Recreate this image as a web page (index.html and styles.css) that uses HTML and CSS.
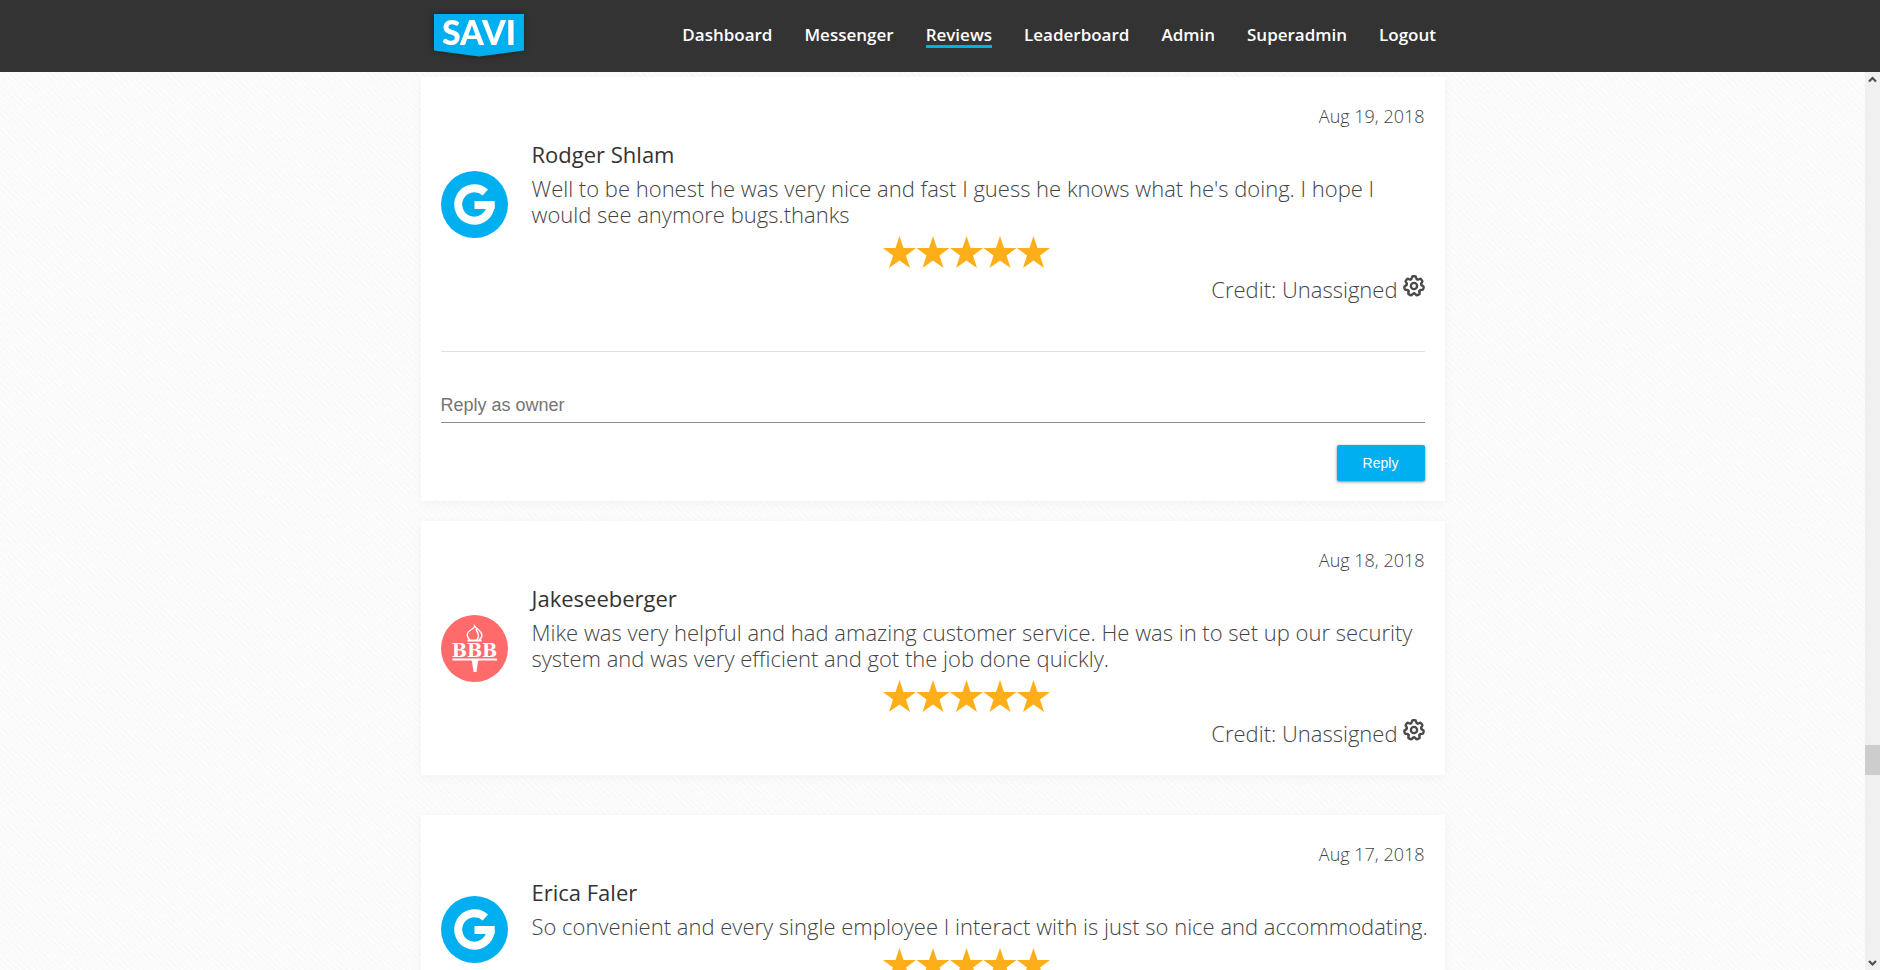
FILE: index.html
```html
<!DOCTYPE html>
<html lang="en">
<head>
  <meta charset="UTF-8">
  <meta name="viewport" content="width=device-width, initial-scale=1.0">
  <title>Savi - Reviews</title>
  <link rel="stylesheet" href="styles.css">
</head>
<body>
  <!-- shared icons -->
  <svg class="sprite" aria-hidden="true">
    <symbol id="google" viewBox="0 0 67 67">
      <circle cx="33.5" cy="33.5" r="33.5" fill="#00aff0"/>
      <path d="M44.3 21.5A16.2 16.2 0 1 0 49.6 34" fill="none" stroke="#fff" stroke-width="8"/>
      <rect x="33.5" y="30" width="20.2" height="8" fill="#fff"/>
    </symbol>
    <symbol id="stars" viewBox="0 0 167 32">
      <g fill="#fdae19">
        <path id="star" d="M16.500 0l4 12h12.500l-10 7.500 4 12.500-10.500-7.500-10.500 7.500 4-12.500-10-7.500h12.500z"/>
        <use href="#star" x="33.500"/>
        <use href="#star" x="67"/>
        <use href="#star" x="100.500"/>
        <use href="#star" x="134"/>
      </g>
    </symbol>
    <symbol id="gear" viewBox="-12 -12 24 24">
      <g fill="none" stroke="#4a4a4a" stroke-width="2.6" stroke-linecap="round" stroke-linejoin="round">
        <circle r="3.4"/>
        <path id="tooth" d="M-3.5-7.3Q-2.3-7.6-2.3-9.2Q-2.1-10.6-1-10.6H1Q2.1-10.6 2.3-9.2Q2.3-7.6 3.5-7.3"/>
        <use href="#tooth" transform="rotate(51.43)"/>
        <use href="#tooth" transform="rotate(102.86)"/>
        <use href="#tooth" transform="rotate(154.29)"/>
        <use href="#tooth" transform="rotate(205.71)"/>
        <use href="#tooth" transform="rotate(257.14)"/>
        <use href="#tooth" transform="rotate(308.57)"/>
      </g>
    </symbol>
  </svg>

  <header class="header">
    <div class="header-inner">
      <a href="#" class="logo" aria-label="Savi">
        <svg width="90" height="43" viewBox="0 0 90 43">
          <path d="M0 0h90v36.500l-45 6-45-6z" fill="#00aff0"/>
          <text x="45" y="31" text-anchor="middle" class="logo-text">SAVI</text>
        </svg>
      </a>
      <nav class="nav">
        <a href="#">Dashboard</a>
        <a href="#">Messenger</a>
        <a href="#" class="active">Reviews</a>
        <a href="#">Leaderboard</a>
        <a href="#">Admin</a>
        <a href="#">Superadmin</a>
        <a href="#">Logout</a>
      </nav>
    </div>
  </header>

  <div class="page">
    <main class="content">
      <article class="card">
        <div class="review">
          <svg class="avatar"><use href="#google"/></svg>
          <div class="review-body">
            <div class="date">Aug 19, 2018</div>
            <h2 class="name">Rodger Shlam</h2>
            <p class="text">Well to be honest he was very nice and fast I guess he knows what he's doing. I hope I would see anymore bugs.thanks</p>
            <div class="rating"><svg class="stars" role="img" aria-label="5 stars"><use href="#stars"/></svg></div>
            <div class="credit">Credit: Unassigned
              <button type="button" class="gear" aria-label="Assign credit"><svg><use href="#gear"/></svg></button>
            </div>
          </div>
        </div>
        <form class="reply">
          <input type="text" class="reply-input" placeholder="Reply as owner" aria-label="Reply as owner">
          <button type="button" class="reply-button">Reply</button>
        </form>
      </article>

      <article class="card">
        <div class="review">
          <svg class="avatar" viewBox="0 0 67 67">
            <circle cx="33.5" cy="33.5" r="33.5" fill="#ff6b6b"/>
            <path d="M29 25C25 21 25.500 18 29 15.500C32 13.500 33.500 13 33.500 11C36 14.500 40.500 15.500 41 20C41 22.500 39.500 24 38 25" fill="none" stroke="#fff" stroke-width="1.3"/>
            <path d="M35 14C36 17.500 39.500 19.500 36 25" fill="none" stroke="#fff" stroke-width="1.5"/>
            <rect x="26.5" y="24.500" width="14" height="2" fill="#fff"/>
            <text x="33.5" y="41.500" text-anchor="middle" class="bbb-text">BBB</text>
            <rect x="11.5" y="43.500" width="44.5" height="2" fill="#fff"/>
            <path d="M30 45h8l-1 1.500-1.500 10.500h-3l-1.500-10.500z" fill="#fff"/>
          </svg>
          <div class="review-body">
            <div class="date">Aug 18, 2018</div>
            <h2 class="name">Jakeseeberger</h2>
            <p class="text">Mike was very helpful and had amazing customer service. He was in to set up our security system and was very efficient and got the job done quickly.</p>
            <div class="rating"><svg class="stars" role="img" aria-label="5 stars"><use href="#stars"/></svg></div>
            <div class="credit">Credit: Unassigned
              <button type="button" class="gear" aria-label="Assign credit"><svg><use href="#gear"/></svg></button>
            </div>
          </div>
        </div>
      </article>

      <article class="card card-spaced">
        <div class="review">
          <svg class="avatar"><use href="#google"/></svg>
          <div class="review-body">
            <div class="date">Aug 17, 2018</div>
            <h2 class="name">Erica Faler</h2>
            <p class="text">So convenient and every single employee I interact with is just so nice and accommodating.</p>
            <div class="rating"><svg class="stars" role="img" aria-label="5 stars"><use href="#stars"/></svg></div>
          </div>
        </div>
      </article>
    </main>

    <div class="scrollbar" aria-hidden="true">
      <svg class="arrow" viewBox="0 0 15 15"><path d="M4 9.500l3.500-3.500 3.500 3.500" fill="none" stroke="#505050" stroke-width="2.2"/></svg>
      <div class="thumb"></div>
      <svg class="arrow arrow-down" viewBox="0 0 15 15"><path d="M4 6l3.500 3.500 3.500-3.500" fill="none" stroke="#505050" stroke-width="2.2"/></svg>
    </div>
  </div>
</body>
</html>
```
FILE: styles.css
```css
* {
  box-sizing: border-box;
}
body {
  margin: 0;
  height: 100vh;
  display: flex;
  flex-direction: column;
  overflow: hidden;
  font-family: "Open Sans", "Noto Sans", sans-serif;
  font-weight: 300;
  color: #444;
  background-color: #fbfbfb;
}
.sprite {
  position: absolute;
  width: 0;
  height: 0;
}

/* Header */
.header {
  flex: none;
  height: 72px;
  background-color: #333;
}
.header-inner {
  max-width: 1024px;
  height: 72px;
  margin: 0 auto;
  padding: 0 16px 0 6px;
  display: flex;
  justify-content: space-between;
}
.logo {
  padding-top: 14px;
}
.logo svg {
  display: block;
  overflow: visible;
  filter: drop-shadow(0 0 3px rgba(0, 0, 0, 0.4));
}
.logo-text {
  font: 900 34px Lato, sans-serif;
  fill: #fff;
}
.nav {
  display: flex;
  align-items: flex-start;
  gap: 32px;
  padding-top: 24px;
}
.nav a {
  color: #fff;
  font-size: 17px;
  font-weight: 600;
  line-height: 21px;
  text-decoration: none;
  border-bottom: 3px solid transparent;
}
.nav .active {
  border-color: #00aff0;
}

/* Page */
.page {
  flex: 1;
  min-height: 0;
  display: flex;
}
.content {
  flex: 1;
  overflow: hidden;
  padding-top: 5px;
  background-image:
    repeating-linear-gradient(42deg, rgba(0, 0, 0, 0.01) 0 1px, transparent 1px 4px),
    repeating-linear-gradient(48deg, rgba(255, 255, 255, 0.7) 0 1px, transparent 1px 5px);
}
.card {
  max-width: 1024px;
  margin: 0 auto 20px;
  background-color: #fff;
  box-shadow: 0 2px 10px rgba(0, 0, 0, 0.04);
}
.card-spaced {
  margin-top: 40px;
}
.review {
  display: flex;
  align-items: center;
  min-height: 228px;
  padding: 20px;
}
.avatar {
  flex: none;
  width: 67px;
  height: 67px;
  margin-right: 24px;
}
.bbb-text {
  font: bold 18px "DejaVu Serif", serif;
  fill: #fff;
}
.review-body {
  flex: 1;
  align-self: flex-start;
}
.date {
  font-size: 18px;
  line-height: 38px;
  text-align: right;
}
.name {
  margin: 6px 0 8px;
  font-size: 22px;
  font-weight: 400;
  line-height: 26px;
  color: #333;
}
/* long lines may run a little into the card padding */
.text {
  margin: 0 -10px 9px 0;
  font-size: 22px;
  line-height: 26px;
}
.rating {
  padding-right: 24px;
  text-align: center;
}
.stars {
  display: block;
  width: 167px;
  height: 32px;
  margin: 0 auto;
}
.credit {
  display: flex;
  justify-content: flex-end;
  gap: 5px;
  padding: 6px 0 7px;
  font-size: 22px;
  line-height: 30px;
}
.gear {
  width: 22px;
  height: 24px;
  padding: 0;
  border: 0;
  background: none;
  cursor: pointer;
}
.gear svg {
  display: block;
  width: 22px;
  height: 22px;
}

/* Reply form */
.reply {
  display: flex;
  flex-direction: column;
  margin: 0 20px;
  padding: 36px 0 20px;
  border-top: 1px solid #e0e0e0;
}
.card .reply {
  margin-top: 20px;
}
.reply-input {
  width: 100%;
  height: 35px;
  padding: 0;
  border: 0;
  border-bottom: 1px solid #8c8c8c;
  background: none;
  font: 18px "Liberation Sans", Arial, sans-serif;
}
.reply-input::placeholder {
  color: #757575;
}
.reply-button {
  align-self: flex-end;
  width: 88px;
  height: 36px;
  margin-top: 22px;
  border: 0;
  border-radius: 2px;
  background-color: #00aff0;
  box-shadow: 0 1px 3px rgba(0, 0, 0, 0.5);
  color: #fff;
  font: 14px "Liberation Sans", Arial, sans-serif;
  cursor: pointer;
}

/* Scrollbar */
.scrollbar {
  flex: none;
  width: 15px;
  display: grid;
  grid-template-rows: 15px 11fr 30px 3fr 15px;
  background-color: #f0f0f0;
}
.arrow {
  width: 15px;
  height: 15px;
}
.thumb {
  grid-row: 3;
  background-color: #cdcdcd;
}
.arrow-down {
  grid-row: 5;
}
```
